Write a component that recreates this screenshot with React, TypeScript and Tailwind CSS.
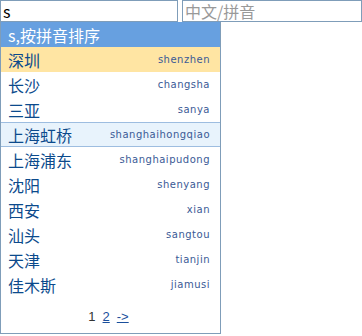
import React, { useState } from 'react';

type City = {
    name: string;
    pinyin: string;
};

const cities: City[] = [
    { name: '深圳', pinyin: 'shenzhen' },
    { name: '长沙', pinyin: 'changsha' },
    { name: '三亚', pinyin: 'sanya' },
    { name: '上海虹桥', pinyin: 'shanghaihongqiao' },
    { name: '上海浦东', pinyin: 'shanghaipudong' },
    { name: '沈阳', pinyin: 'shenyang' },
    { name: '西安', pinyin: 'xian' },
    { name: '汕头', pinyin: 'sangtou' },
    { name: '天津', pinyin: 'tianjin' },
    { name: '佳木斯', pinyin: 'jiamusi' },
];

const cjk = "font-['Noto_Sans_CJK_SC','Noto_Sans',sans-serif]";

const App: React.FC = () => {
    const [query, setQuery] = useState<string>('s');
    const [hoverIndex] = useState<number>(0);
    const [selectedIndex] = useState<number>(3);

    return (
        <div className={`w-[362px] h-[336px] bg-white ${cjk}`}>
            {/* 입력창 두 개 */}
            <div className="flex gap-[4px]">
                <input
                    value={query}
                    onChange={(e) => setQuery(e.target.value)}
                    className="w-[178px] h-[22px] border border-[#7f9db9] px-[2px] text-[16px] leading-[20px] text-black outline-none"
                />
                <input
                    placeholder="中文/拼音"
                    className="w-[180px] h-[22px] border border-[#7f9db9] px-[2px] text-[16px] leading-[20px] text-black outline-none placeholder:text-[#999999]"
                />
            </div>

            <div className="w-[221px] h-[312px] border border-[#7f9db9] border-t-0 flex flex-col">
                <div className="h-[25px] bg-[#67a0e0] text-white text-[16px] leading-[26px] pl-[7px]">
                    s,按拼音排序
                </div>
                <div className="flex flex-col">
                    {cities.map((c, i) => {
                        const isHover = i === hoverIndex;
                        const isSelected = i === selectedIndex;
                        return (
                            <div
                                key={c.pinyin}
                                className={[
                                    'h-[25px] flex items-center justify-between pl-[7px] pr-[10px] cursor-pointer',
                                    isHover ? 'bg-[#ffe5a3]' : '',
                                    isSelected ? 'bg-[#e8f3fc] border-y border-[#9dbde0]' : '',
                                ].join(' ')}
                            >
                                <span className="text-[16px] text-[#0b4a8c]">{c.name}</span>
                                <span className="text-[10px] tracking-[0.5px] text-[#3a5a96] font-['DejaVu_Sans',sans-serif]">
                                    {c.pinyin}
                                </span>
                            </div>
                        );
                    })}
                </div>
                <div className="flex-1 flex items-center justify-center gap-[7px] text-[13px] font-['Liberation_Sans',sans-serif] pt-[3px] pr-[4px]">
                    <span className="text-[#333333]">1</span>
                    <a href="#" className="text-[#1a4f9c] underline">2</a>
                    <a href="#" className="text-[#1a4f9c] underline">-&gt;</a>
                </div>
            </div>
        </div>
    );
};

export default App;
